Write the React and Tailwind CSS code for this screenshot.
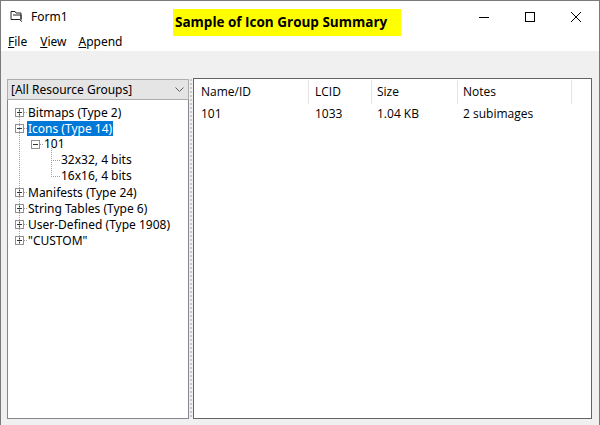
import React from 'react';

const font = { fontFamily: '"Noto Sans", "Open Sans", sans-serif' };

const PlusBox = ({ open }) => (
  <svg width="9" height="9" viewBox="0 0 9 9" className="shrink-0">
    <rect x="0.5" y="0.5" width="8" height="8" fill="#fff" stroke="#919191" />
    <line x1="2" y1="4.5" x2="7" y2="4.5" stroke="#333" />
    {!open && <line x1="4.5" y1="2" x2="4.5" y2="7" stroke="#333" />}
  </svg>
);

const TreeRow = ({ label, open, selected }) => (
  <div className="flex items-center h-[16px] pl-[7px]">
    <PlusBox open={open} />
    <span className="w-[3px] border-t border-dotted border-[#a0a0a0]"></span>
    <span className={`px-[1px] leading-[15px] ${selected ? 'bg-[#0078d7] text-white' : ''}`}>{label}</span>
  </div>
);

const App = () => {
  const columns = [
    { name: 'Name/ID', w: 'w-[115px] pl-[7px]' },
    { name: 'LCID', w: 'w-[63px] pl-[6px]' },
    { name: 'Size', w: 'w-[86px] pl-[5px]' },
    { name: 'Notes', w: 'w-[114px] pl-[5px]' },
  ];

  return (
    <div className="w-[600px] h-[425px] bg-[#f0f0f0] flex flex-col border-l border-r border-t border-[#7a7a7a] overflow-hidden" style={font}>
      {/* Title bar */}
      <div className="h-[31px] bg-white flex items-center relative shrink-0">
        <svg width="14" height="13" viewBox="0 0 14 13" className="ml-[9px]">
          <path d="M1 1.5h4l1 1.5h5v6" fill="none" stroke="#222" />
          <path d="M1 1.5v8h9" fill="none" stroke="#222" />
          <path d="M3 5h8v5" fill="none" stroke="#222" />
          <path d="M10 10l2 1.5" stroke="#222" />
        </svg>
        <span className="ml-[7px] text-[12px] text-black">Form1</span>
        <div className="absolute left-[172px] top-[8px] w-[228px] h-[27px] bg-[#ffff00] flex items-center pl-[2px]">
          <span className="text-[13.5px] font-bold text-black" style={{ fontFamily: '"Open Sans", sans-serif' }}>Sample of Icon Group Summary</span>
        </div>
        <div className="ml-auto flex items-center h-full">
          <div className="w-[46px] flex justify-center">
            <svg width="10" height="10" viewBox="0 0 10 10"><line x1="0" y1="5.5" x2="10" y2="5.5" stroke="#000" /></svg>
          </div>
          <div className="w-[46px] flex justify-center">
            <svg width="10" height="10" viewBox="0 0 10 10"><rect x="0.5" y="0.5" width="9" height="9" fill="none" stroke="#000" /></svg>
          </div>
          <div className="w-[46px] flex justify-center">
            <svg width="10" height="10" viewBox="0 0 10 10"><path d="M0 0L10 10M10 0L0 10" stroke="#000" /></svg>
          </div>
        </div>
      </div>

      {/* Menu bar */}
      <div className="h-[19px] bg-white flex items-center text-[12px] text-black shrink-0">
        <span className="ml-[7px]"><u>F</u>ile</span>
        <span className="ml-[13px]"><u>V</u>iew</span>
        <span className="ml-[12px]"><u>A</u>ppend</span>
      </div>

      {/* Body */}
      <div className="flex-1 flex pl-[6px] pr-[6px] pt-[28px] pb-[6px]">
        {/* Left column */}
        <div className="w-[182px] flex flex-col">
          <div className="h-[21px] bg-[#e5e5e5] border border-[#adadad] flex items-center justify-between pl-[3px] pr-[4px] text-[12px] text-black">
            <span>[All Resource Groups]</span>
            <svg width="9" height="6" viewBox="0 0 9 6"><path d="M0.5 0.5L4.5 4.5L8.5 0.5" fill="none" stroke="#606060" /></svg>
          </div>
          <div className="flex-1 bg-white border border-[#828790] border-t-0 text-[12px] text-black pt-[4px] relative">
            <span className="absolute left-[11px] top-[9px] h-[135px] border-l border-dotted border-[#a0a0a0]"></span>
            <TreeRow label="Bitmaps (Type 2)" />
            <TreeRow label="Icons (Type 14)" open selected />
            <div className="flex items-center h-[16px] pl-[23px]">
              <PlusBox open />
              <span className="w-[3px] border-t border-dotted border-[#a0a0a0]"></span>
              <span className="px-[1px]">101</span>
            </div>
            <div className="flex items-center h-[16px] pl-[43px]">
              <span className="w-[9px] border-t border-dotted border-[#a0a0a0]"></span>
              <span className="px-[1px]">32x32, 4 bits</span>
            </div>
            <div className="flex items-center h-[16px] pl-[43px]">
              <span className="w-[9px] border-t border-dotted border-[#a0a0a0]"></span>
              <span className="px-[1px]">16x16, 4 bits</span>
            </div>
            <span className="absolute left-[43px] top-[45px] h-[32px] border-l border-dotted border-[#a0a0a0]"></span>
            <TreeRow label="Manifests (Type 24)" />
            <TreeRow label="String Tables (Type 6)" />
            <TreeRow label="User-Defined (Type 1908)" />
            <TreeRow label={'"CUSTOM"'} />
          </div>
        </div>

        {/* Splitter */}
        <div className="w-[4px] flex justify-center">
          <div className="w-[2px] h-full bg-[repeating-linear-gradient(to_bottom,#c8c8c8_0px,#c8c8c8_2px,#f0f0f0_2px,#f0f0f0_4px)]"></div>
        </div>

        {/* List view */}
        <div className="w-[399px] -mt-[1px] bg-white border border-[#646464] flex flex-col text-[12px] text-black" style={{ fontFamily: '"Open Sans", sans-serif' }}>
          <div className="flex h-[25px] pt-[1px]">
            {columns.map(c => (
              <div key={c.name} className={`${c.w} flex items-center border-r border-[#e5e5e5]`}>{c.name}</div>
            ))}
          </div>
          <div className="flex h-[20px]">
            <div className="w-[115px] flex items-center pl-[7px]">101</div>
            <div className="w-[63px] flex items-center pl-[6px]">1033</div>
            <div className="w-[86px] flex items-center pl-[5px]">1.04 KB</div>
            <div className="w-[114px] flex items-center pl-[5px]">2 subimages</div>
          </div>
        </div>
      </div>
    </div>
  );
};

export default App;
